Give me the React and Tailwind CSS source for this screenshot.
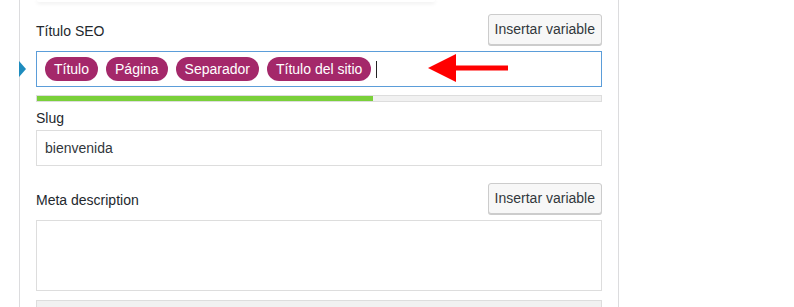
const pills = ['Título', 'Página', 'Separador', 'Título del sitio']

function InsertButton() {
  return (
    <button className="h-[31px] px-[6px] rounded-[3px] border border-[#cccccc] bg-[#f7f7f7] text-[14px] text-[#32373c] shadow-[0_1px_0_#cccccc]">
      Insertar variable
    </button>
  )
}

function ProgressBar({ value }) {
  return (
    <div className="h-[7px] border border-[#dddddd] bg-[#f1f1f1]">
      <div className="h-full bg-[#7ad03a]" style={{ width: `${value}%` }} />
    </div>
  )
}

export default function App() {
  return (
    <div className="w-[794px] h-[307px] overflow-hidden bg-white font-['Liberation_Sans',Arial,sans-serif]">
      <div className="ml-[19px] w-[600px] h-[307px] border-x border-[#dcdcde] px-4">
        {/* bottom edge of the card above */}
        <div className="ml-px w-[398px] h-[2px] rounded-b-md bg-white shadow-[0_1px_4px_rgba(0,0,0,0.12)]" />

        <div className="mt-[12px] flex items-center justify-between">
          <label className="mt-1 text-[14px] text-[#23282d]">Título SEO</label>
          <InsertButton />
        </div>

        <div className="relative mt-[6px]">
          <div className="absolute left-[-17px] top-[10px] w-0 h-0 border-y-[8px] border-y-transparent border-l-[7px] border-l-[#1e8cbe]" />
          <div className="h-[36px] border border-[#5b9dd9] flex items-center gap-[8px] pl-[8px]">
            {pills.map((p) => (
              <span key={p} className="h-[24px] leading-[24px] px-[9px] rounded-full bg-[#a4286a] text-white text-[14px]">
                {p}
              </span>
            ))}
            <span className="ml-[-3px] w-px h-[17px] bg-[#222]" />
          </div>
          <svg className="absolute left-[392px] top-[3px]" width="80" height="28" viewBox="0 0 80 28">
            <polygon points="0,14 28,0 28,28" fill="#ff0000" />
            <rect x="27" y="11.5" width="53" height="5" fill="#ff0000" />
          </svg>
        </div>

        <div className="mt-[8px]">
          <ProgressBar value={59.5} />
        </div>

        <label className="block mt-[6px] leading-[20px] text-[14px] text-[#23282d]">Slug</label>
        <div className="mt-[2px] h-[36px] border border-[#dddddd] flex items-center px-[8px] text-[14px] text-[#32373c]">
          bienvenida
        </div>

        <div className="mt-[17px] flex items-center justify-between">
          <label className="mt-1 text-[14px] text-[#23282d]">Meta description</label>
          <InsertButton />
        </div>

        <div className="mt-[6px] h-[71px] border border-[#dddddd]" />

        <div className="mt-[9px] h-[20px] border border-[#dddddd] bg-[#f1f1f1]" />
      </div>
    </div>
  )
}
